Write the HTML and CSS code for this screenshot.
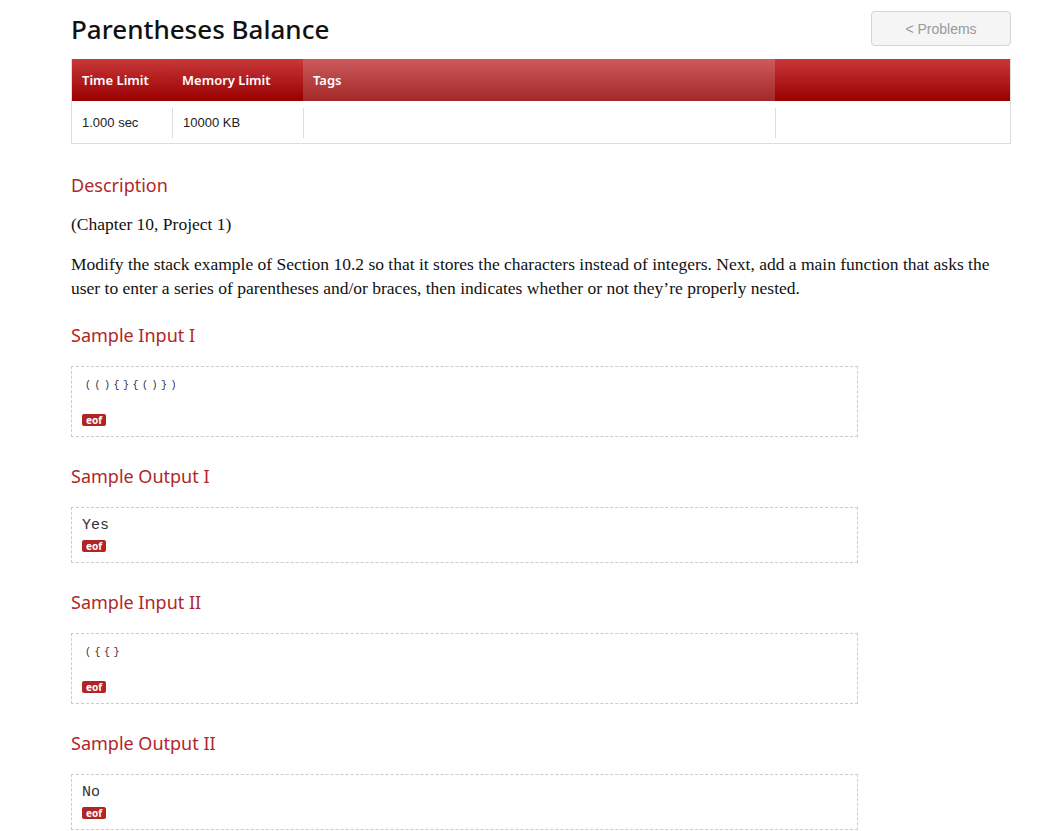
FILE: index.html
```html
<!DOCTYPE html>
<html>
<head>
<meta charset="utf-8">
<title>Parentheses Balance</title>
<link rel="stylesheet" href="styles.css">
</head>
<body>
<div class="container">
  <div class="page-header">
    <h1 class="title">Parentheses Balance</h1>
    <a class="btn-problems" href="#">&lt; Problems</a>
  </div>
  <table class="limits">
    <thead>
      <tr>
        <th class="c-time">Time Limit</th>
        <th class="c-mem">Memory Limit</th>
        <th class="c-tags">Tags</th>
        <th class="c-rest"></th>
      </tr>
    </thead>
    <tbody>
      <tr>
        <td><div class="cell first">1.000 sec</div></td>
        <td><div class="cell">10000 KB</div></td>
        <td><div class="cell"></div></td>
        <td><div class="cell"></div></td>
      </tr>
    </tbody>
  </table>

  <h2 class="sec sec-desc">Description</h2>
  <p class="desc">(Chapter 10, Project 1)</p>
  <p class="desc">Modify the stack example of Section 10.2 so that it stores the characters instead of integers. Next, add a main function that asks the user to enter a series of parentheses and/or braces, then indicates whether or not they’re properly nested.</p>

  <h2 class="sec">Sample Input I</h2>
  <div class="sample">
    <pre class="small">((){}{()})</pre>
    <span class="eof">eof</span>
  </div>

  <h2 class="sec">Sample Output I</h2>
  <div class="sample">
    <pre class="big">Yes</pre>
    <span class="eof">eof</span>
  </div>

  <h2 class="sec">Sample Input II</h2>
  <div class="sample">
    <pre class="small">({{}</pre>
    <span class="eof">eof</span>
  </div>

  <h2 class="sec">Sample Output II</h2>
  <div class="sample">
    <pre class="big">No</pre>
    <span class="eof">eof</span>
  </div>
</div>
</body>
</html>
```

FILE: styles.css
```css
html, body {
  margin: 0;
  padding: 0;
  background: #fff;
}
body {
  font-family: "Liberation Serif", Georgia, serif;
  color: #222;
}
.container {
  width: 940px;
  margin: 0 0 0 71px;
}
.page-header {
  display: flex;
  justify-content: space-between;
  align-items: flex-start;
  height: 59px;
}
.title {
  margin: 12px 0 0 0;
  font-family: "Noto Sans", sans-serif;
  font-weight: 500;
  font-size: 26px;
  line-height: 34px;
  color: #111;
}
.btn-problems {
  margin-top: 11px;
  box-sizing: border-box;
  width: 140px;
  height: 35px;
  border: 1px solid #d4d4d4;
  border-radius: 4px;
  background: #f5f5f5;
  color: #999;
  font-family: "Liberation Sans", Arial, sans-serif;
  font-size: 14px;
  line-height: 35px;
  text-align: center;
  text-decoration: none;
}
.limits {
  width: 940px;
  border-collapse: collapse;
  border: 1px solid #ddd;
  border-top: none;
}
.limits th {
  height: 42px;
  padding: 0 10px;
  text-align: left;
  font-family: "Noto Sans", sans-serif;
  font-size: 13px;
  font-weight: 600;
  color: #fff;
  background: linear-gradient(#c8383a, #990000);
}
.limits th.c-time { width: 80px; }
.limits th.c-mem { width: 111px; }
.limits th.c-tags {
  width: 452px;
  background: linear-gradient(#cc5a5c, #a32828);
}
.limits td {
  height: 30px;
  padding: 7px 0 5px 0;
  vertical-align: top;
}
.cell {
  height: 30px;
  border-left: 1px solid #ddd;
  padding: 0 10px;
  font-family: "Liberation Sans", Arial, sans-serif;
  font-size: 13px;
  line-height: 30px;
  color: #222;
}
.cell.first { border-left: none; }
.sec {
  margin: 27px 0 0 0;
  font-family: "Noto Sans", sans-serif;
  font-weight: 400;
  font-size: 18px;
  line-height: 24px;
  color: #b0272a;
}
.sec.sec-desc { margin-top: 29px; }
.desc + .sec { margin-top: 23px; }
.desc {
  margin: 15px 0 0 0;
  font-size: 17.5px;
  line-height: 24px;
  color: #111;
}
.desc + .desc { margin-top: 16px; }
.sample {
  width: 787px;
  box-sizing: border-box;
  border: 1px dashed #ccc;
  margin-top: 19px;
  padding: 9px 10px 10px 10px;
}
.sample pre {
  margin: 0;
}
.small {
  font-family: "Liberation Mono", monospace;
  font-size: 10px;
  letter-spacing: 3.5px;
  line-height: 19px;
  height: 38px;
  padding-left: 3px;
  color: #2a2a40;
}
.big {
  font-family: "Liberation Mono", "Courier New", monospace;
  font-size: 15px;
  line-height: 18px;
  margin-bottom: 5px !important;
  color: #333;
}
.eof {
  display: block;
  width: max-content;
  background: #b22424;
  color: #fff;
  font-family: "Noto Sans", sans-serif;
  font-weight: 700;
  font-size: 10px;
  line-height: 12px;
  padding: 0 4px;
  border-radius: 2px;
}
```
